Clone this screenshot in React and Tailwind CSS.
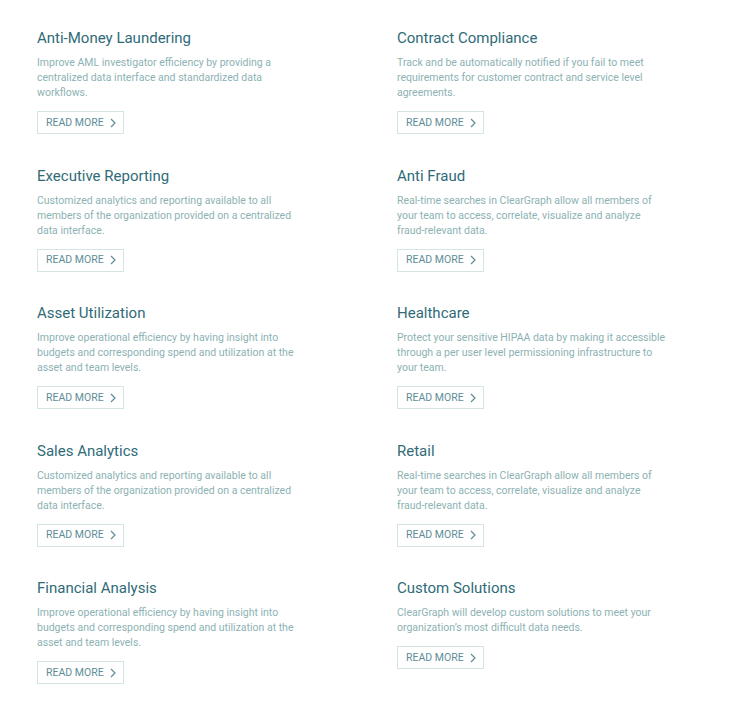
import React from "react";

const items = [
  ["Anti-Money Laundering", "Improve AML investigator efficiency by providing a centralized data interface and standardized data workflows."],
  ["Contract Compliance", "Track and be automatically notified if you fail to meet requirements for customer contract and service level agreements."],
  ["Executive Reporting", "Customized analytics and reporting available to all members of the organization provided on a centralized data interface."],
  ["Anti Fraud", "Real-time searches in ClearGraph allow all members of your team to access, correlate, visualize and analyze fraud-relevant data."],
  ["Asset Utilization", "Improve operational efficiency by having insight into budgets and corresponding spend and utilization at the asset and team levels."],
  ["Healthcare", "Protect your sensitive HIPAA data by making it accessible through a per user level permissioning infrastructure to your team."],
  ["Sales Analytics", "Customized analytics and reporting available to all members of the organization provided on a centralized data interface."],
  ["Retail", "Real-time searches in ClearGraph allow all members of your team to access, correlate, visualize and analyze fraud-relevant data."],
  ["Financial Analysis", "Improve operational efficiency by having insight into budgets and corresponding spend and utilization at the asset and team levels."],
  ["Custom Solutions", "ClearGraph will develop custom solutions to meet your organization\u2019s most difficult data needs."],
];

function Card({ title, desc }) {
  return (
    <div className="flex flex-col items-start">
      <h3 className="text-[15px] leading-[20px] text-[#2f6b77] font-normal">{title}</h3>
      <p className="mt-[7px] w-[272px] text-[10.5px] leading-[15px] text-[#8cb2b3]">{desc}</p>
      <button className="mt-[11px] h-[23px] w-[87px] flex items-center pl-[8px] border border-[#d4e3e4] text-[10.5px] text-[#5e8d97]">
        <span>READ MORE</span>
        <svg width="8" height="10" viewBox="0 0 8 10" className="ml-[5px]" fill="none">
          <path d="M2 1l4 4-4 4" stroke="#5e8d97" strokeWidth="1.2" />
        </svg>
      </button>
    </div>
  );
}

export default function App() {
  return (
    <div className="w-[740px] h-[705px] bg-white pl-[37px] pt-[28px]" style={{ fontFamily: "Roboto, 'Open Sans', sans-serif" }}>
      <div className="grid grid-cols-[360px_1fr] gap-y-[31.5px]">
        {items.map(([t, d]) => (
          <Card key={t} title={t} desc={d} />
        ))}
      </div>
    </div>
  );
}
